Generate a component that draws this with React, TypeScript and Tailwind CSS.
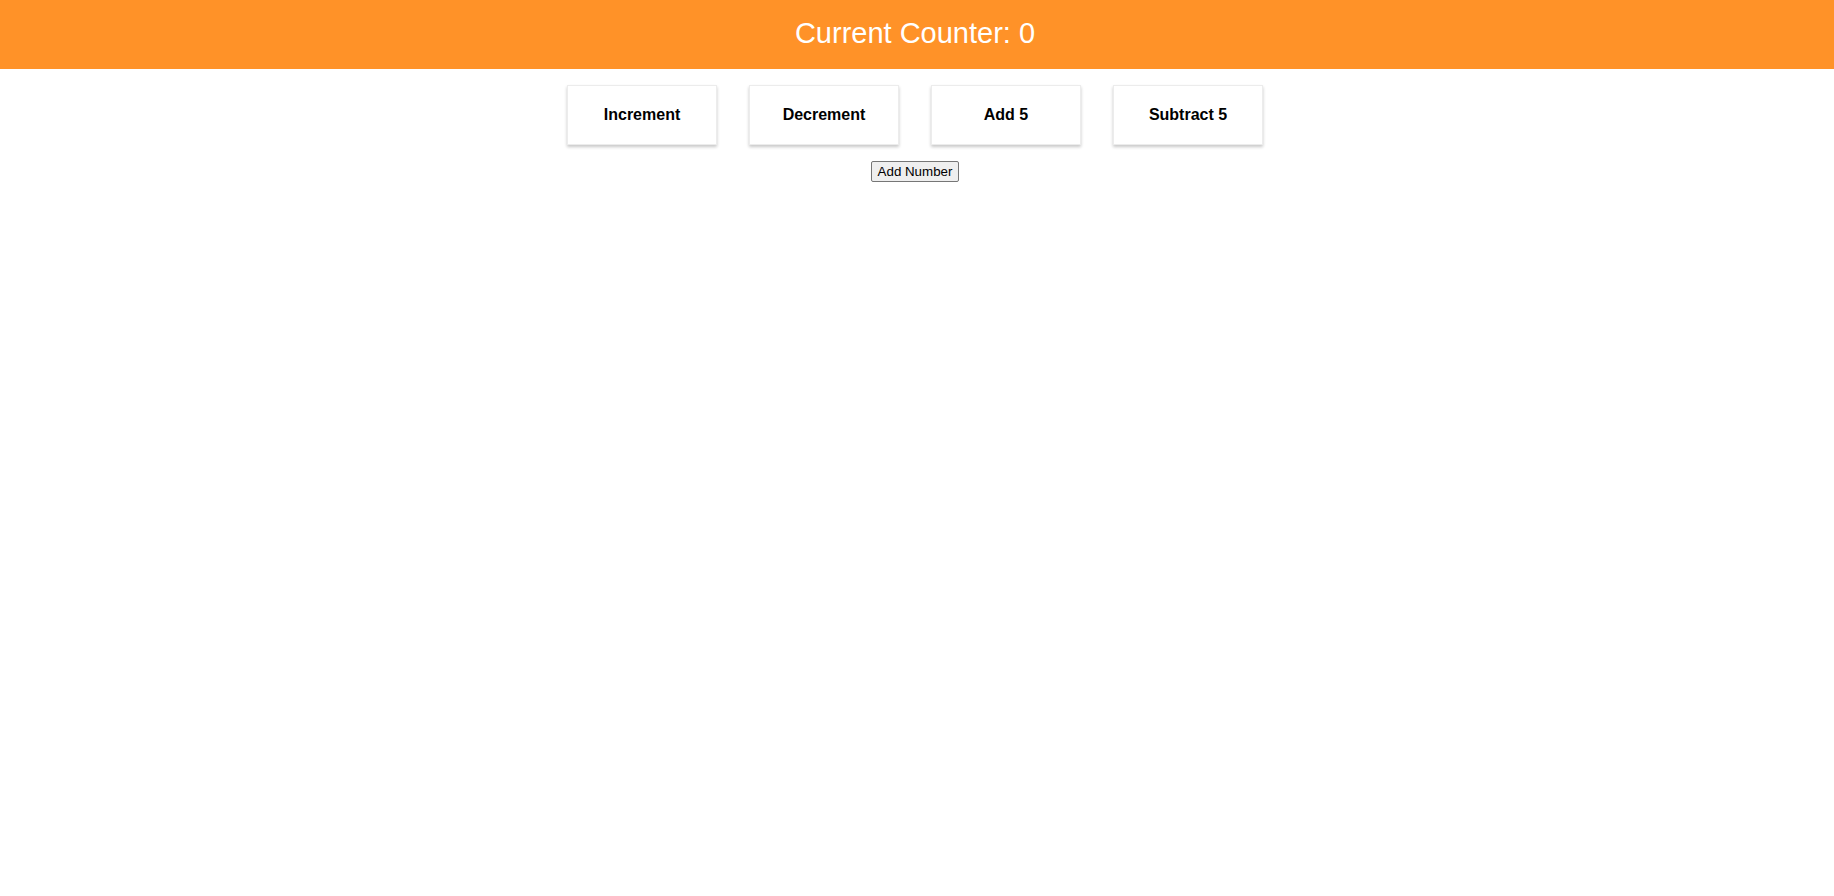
const ACTIONS = ["Increment", "Decrement", "Add 5", "Subtract 5"]

export default function App() {
  const counter = 0

  return (
    <div className="min-h-screen bg-white font-['Liberation_Sans',Arial,sans-serif] text-black">
      <header className="h-[69px] pb-[2px] pr-1 bg-[#ff9228] flex items-center justify-center">
        <h1 className="text-[29px] text-white font-normal">Current Counter: {counter}</h1>
      </header>

      <div className="pr-1">
        <div className="flex justify-center">
          {ACTIONS.map((label) => (
            <div
              key={label}
              className="m-4 w-[150px] h-[60px] flex items-center justify-center bg-white border border-[#ececec] shadow-[0_2px_3px_rgba(0,0,0,0.22)] text-base font-bold cursor-pointer"
            >
              {label}
            </div>
          ))}
        </div>

        <div className="flex justify-center">
          <button className="px-[6px] py-[2px] text-[13.33px] leading-[normal] bg-[#efefef] border border-[#767676] rounded-[2px] text-black">
            Add Number
          </button>
        </div>
      </div>
    </div>
  )
}
